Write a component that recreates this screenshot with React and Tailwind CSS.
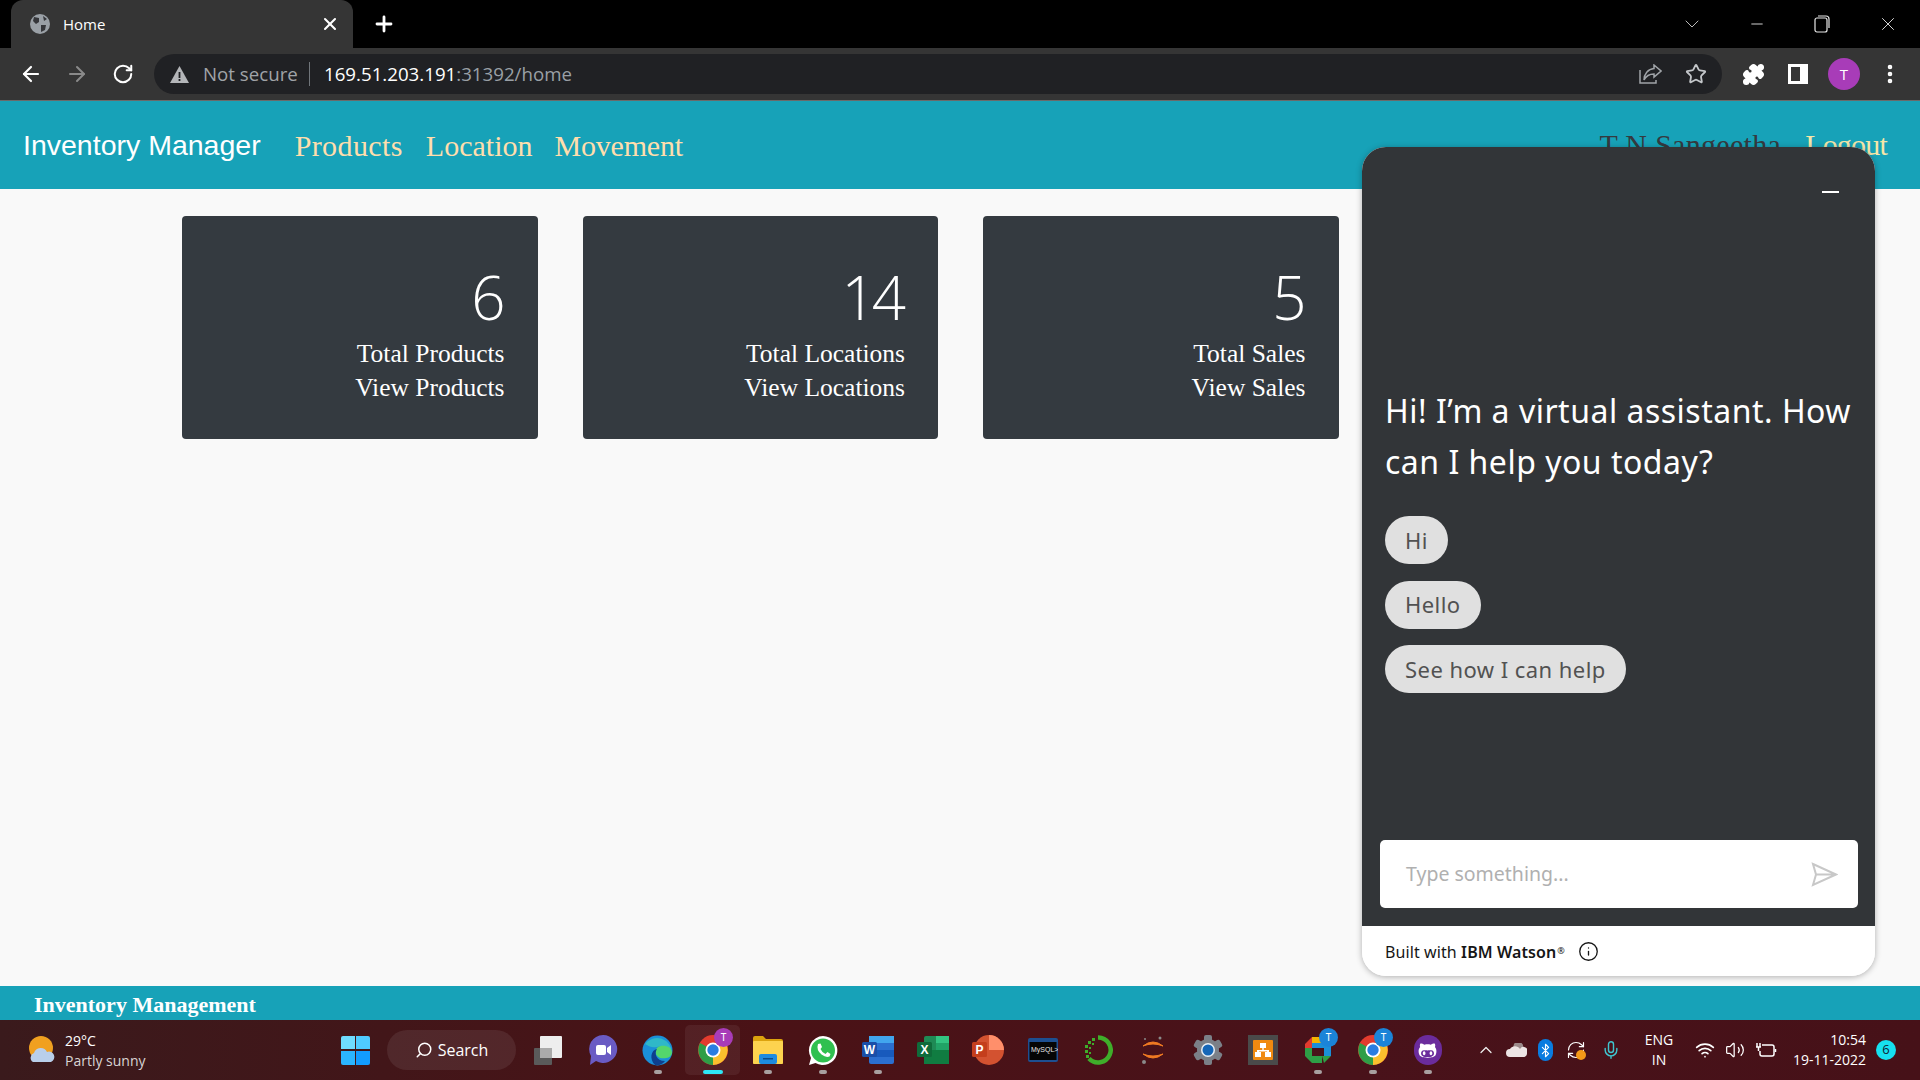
import React from "react";
import { ArrowLeft, ArrowRight, RotateCw, Star, Mic, Wifi, Volume2, Bluetooth, ChevronUp, ChevronDown, Minus, X, Plus, Search, Info, RefreshCw, EllipsisVertical, Puzzle } from "lucide-react";
import { FaGithubAlt } from "react-icons/fa";

const serif = "[font-family:'Liberation_Serif',serif]";

function Globe() {
  return (
    <svg width="20" height="20" viewBox="0 0 20 20">
      <circle cx="10" cy="10" r="10" fill="#9aa0a6" />
      <path d="M4 3 L9 4 L9 8 L6 10 L3 7 Z M11 11 L16 11 L15 16 L11 18 Z M13 2 L17 5 L14 7 Z" fill="#35363a" />
    </svg>
  );
}

function StatCard({ n, a, b }) {
  return (
    <div className="w-[355.5px] h-[223px] bg-[#343a40] rounded-[4px] flex flex-col items-end pt-[48px] pr-[33px] text-white">
      <div className="text-[60px] leading-[66px] font-[350] mb-[7px] mr-[3px] tracking-[-4px] [font-family:'Open_Sans',sans-serif]">{n}</div>
      <div className={`${serif} text-[25.5px] leading-[34px]`}>{a}</div>
      <div className={`${serif} text-[25.5px] leading-[34px]`}>{b}</div>
    </div>
  );
}

function Chip({ children }) {
  return (
    <div className="self-start h-[48px] rounded-[25px] bg-[#e0e0e0] text-[#525252] px-[20px] flex items-center text-[22px] tracking-[0.45px]">
      {children}
    </div>
  );
}

function TaskIcon({ children, dot, active }) {
  return (
    <div className={`relative w-[55px] h-[50px] flex items-center justify-center rounded-[5px] ${active ? "bg-[#ffffff10]" : ""}`}>
      {children}
      {dot && <div className={`absolute bottom-[1px] h-[4px] rounded-full ${active ? "w-[20px] bg-[#2ee6f5]" : "w-[8px] bg-[#a8a0a0]"}`} />}
    </div>
  );
}

function Badge({ c = "#a83cb8" }) {
  return (
    <div className="absolute top-[3px] left-[29px] w-[19px] h-[19px] rounded-full flex items-center justify-center text-[10px] text-white" style={{ background: c }}>
      T
    </div>
  );
}

function Chrome({ size = 30 }) {
  return (
    <svg width={size} height={size} viewBox="0 0 30 30">
      <circle cx="15" cy="15" r="15" fill="#e33b2e" />
      <path d="M15 15 L28 8 A15 15 0 0 1 15 30 Z" fill="#fbc02d" />
      <path d="M15 15 L15 30 A15 15 0 0 1 2 8 Z" fill="#2e9e46" />
      <circle cx="15" cy="15" r="7.5" fill="#fff" />
      <circle cx="15" cy="15" r="5.7" fill="#2a7de1" />
    </svg>
  );
}

function TaskbarApps() {
  return (
    <div className="flex items-center ml-[4px]">
      <TaskIcon>
        <svg width="30" height="30" viewBox="0 0 30 30">
          <rect x="1" y="13" width="18" height="17" rx="1" fill="#5a5a5a" />
          <rect x="7" y="1" width="22" height="22" rx="1" fill="#eeeeee" />
          <rect x="7" y="13" width="12" height="10" fill="#aaa" />
        </svg>
      </TaskIcon>
      <TaskIcon>
        <svg width="30" height="32" viewBox="0 0 30 32">
          <path d="M15 1 A14 14 0 1 1 8 27 L2 31 L3 22 A14 14 0 0 1 15 1 Z" fill="#6a5bc4" />
          <rect x="8" y="11" width="10" height="10" rx="2" fill="#fff" />
          <path d="M19 14 L23 11 V21 L19 18 Z" fill="#fff" />
        </svg>
      </TaskIcon>
      <TaskIcon dot>
        <svg width="31" height="31" viewBox="0 0 31 31">
          <circle cx="15.5" cy="15.5" r="15" fill="#1b8fd8" />
          <path d="M3 9 A15 15 0 0 1 30 18 C28 12 20 10 15 12 C9 13 7 11 3 9 Z" fill="#2fb8c8" />
          <path d="M30 18 C30 11 21 9 16 12 C12 15 13 21 18 23 C23 24 29 23 30 18 Z" fill="#54d66c" />
          <path d="M13 30 C7 24 9 15 15 14 C12 18 14 26 23 26 C20 30 16 31 13 30 Z" fill="#0e3f8e" />
        </svg>
      </TaskIcon>
      <TaskIcon dot active>
        <Chrome />
        <Badge />
      </TaskIcon>
      <TaskIcon dot>
        <svg width="30" height="28" viewBox="0 0 30 28">
          <path d="M0 2 Q0 0 2 0 H10 L13 3 H28 Q30 3 30 5 V26 Q30 28 28 28 H2 Q0 28 0 26 Z" fill="#dca30e" />
          <rect y="5" width="30" height="23" rx="1" fill="#fdd34f" />
          <rect x="6" y="18" width="18" height="10" rx="2" fill="#1d8be0" />
          <rect x="10" y="22" width="10" height="1.5" fill="#0b4c8a" />
        </svg>
      </TaskIcon>
      <TaskIcon dot>
        <svg width="30" height="31" viewBox="0 0 30 31">
          <path d="M15 1 A14.5 14.5 0 1 1 7.5 28 L1 30 L3 23 A14.5 14.5 0 0 1 15 1 Z" fill="#fff" />
          <circle cx="15" cy="15.5" r="12" fill="#2fc04f" />
          <path d="M10 9 L12.5 8.5 L14 12 L12.5 14 Q14 17.5 17.5 19 L19.5 17 L22.5 19 L21.5 21.5 Q18 23 13.5 19.5 Q8 15 10 9 Z" fill="#fff" />
        </svg>
      </TaskIcon>
      <TaskIcon dot>
        <svg width="32" height="28" viewBox="0 0 32 28">
          <rect x="7" y="0" width="25" height="28" rx="2" fill="#2b6fd0" />
          <rect x="7" y="0" width="25" height="7" fill="#41a5ee" />
          <rect x="7" y="14" width="25" height="7" fill="#185abd" />
          <rect x="0" y="6" width="15" height="15" rx="1.5" fill="#1a4fa8" />
          <text x="7.5" y="18" textAnchor="middle" fontSize="12" fontWeight="700" fill="#fff" fontFamily="Liberation Sans">W</text>
        </svg>
      </TaskIcon>
      <TaskIcon>
        <svg width="32" height="28" viewBox="0 0 32 28">
          <rect x="7" y="0" width="25" height="28" rx="2" fill="#1f8a55" />
          <rect x="19" y="0" width="13" height="7" fill="#33c481" />
          <rect x="19" y="7" width="13" height="7" fill="#21a366" />
          <rect x="7" y="14" width="25" height="14" fill="#107c41" />
          <rect x="0" y="6" width="15" height="15" rx="1.5" fill="#0f6b3a" />
          <text x="7.5" y="18" textAnchor="middle" fontSize="12" fontWeight="700" fill="#fff" fontFamily="Liberation Sans">X</text>
        </svg>
      </TaskIcon>
      <TaskIcon>
        <svg width="32" height="30" viewBox="0 0 32 30">
          <circle cx="17" cy="15" r="15" fill="#d35230" />
          <path d="M17 0 A15 15 0 0 1 32 15 H17 Z" fill="#ff8f6b" />
          <rect x="0" y="7" width="15" height="15" rx="1.5" fill="#c43e1c" />
          <text x="7.5" y="19" textAnchor="middle" fontSize="12" fontWeight="700" fill="#fff" fontFamily="Liberation Sans">P</text>
        </svg>
      </TaskIcon>
      <TaskIcon>
        <svg width="30" height="24" viewBox="0 0 30 24">
          <rect width="30" height="24" rx="2" fill="#1d4f91" />
          <rect x="1.5" y="4" width="27" height="18" fill="#050505" />
          <text x="3" y="14" fontSize="7" fill="#e8e8e8" fontFamily="Liberation Sans">MySQL&gt;</text>
        </svg>
      </TaskIcon>
      <TaskIcon>
        <svg width="30" height="30" viewBox="0 0 30 30">
          <path d="M15 2.5 A12.5 12.5 0 1 1 6 23.5" fill="none" stroke="#3fae2a" strokeWidth="4.5" />
          <g fill="#3fae2a">
            <rect x="9" y="3" width="3" height="3" /><rect x="5" y="6" width="3" height="3" /><rect x="9" y="8" width="2" height="2" />
            <rect x="2" y="10" width="3" height="3" /><rect x="6" y="12" width="2" height="2" /><rect x="2" y="15" width="3" height="3" />
            <rect x="6" y="17" width="2" height="2" /><rect x="3" y="20" width="3" height="3" />
          </g>
        </svg>
      </TaskIcon>
      <TaskIcon>
        <svg width="26" height="30" viewBox="0 0 26 30">
          <path d="M3 11 Q13 3 23 11 Q13 7 3 11 Z M3 19 Q13 27 23 19 Q13 23 3 19 Z" fill="#f07a22" stroke="#f07a22" strokeWidth="1" />
          <circle cx="20" cy="3" r="1.5" fill="#8a8a8a" />
          <circle cx="4" cy="27" r="2" fill="#8a8a8a" />
          <circle cx="5" cy="4" r="1" fill="#8a8a8a" />
        </svg>
      </TaskIcon>
      <TaskIcon>
        <svg width="30" height="30" viewBox="0 0 30 30">
          <g fill="#7b8088">
            <circle cx="15" cy="15" r="11" />
            <rect x="11" y="0" width="8" height="30" rx="2" />
            <rect x="11" y="0" width="8" height="30" rx="2" transform="rotate(60 15 15)" />
            <rect x="11" y="0" width="8" height="30" rx="2" transform="rotate(120 15 15)" />
          </g>
          <circle cx="15" cy="15" r="7" fill="#e8eef5" />
          <circle cx="15" cy="15" r="5.5" fill="#1566b7" />
        </svg>
      </TaskIcon>
      <TaskIcon>
        <svg width="30" height="30" viewBox="0 0 30 30">
          <rect width="30" height="30" fill="#4a4a4a" />
          <rect x="5" y="5" width="20" height="20" rx="1" fill="#f08a10" />
          <path d="M12 8 H18 V13 H15.7 V15 H21 V17 H23 V22 H17 V17 H19 V16.5 H11 V17 H13 V22 H7 V17 H9 V15 H14.3 V13 H12 Z" fill="#fff" />
        </svg>
      </TaskIcon>
      <TaskIcon dot>
        <svg width="30" height="30" viewBox="0 0 30 30">
          <path d="M9 2 H21 L28 9 V21 H21 V13 H9 Z" fill="#1b8fd8" />
          <path d="M9 2 H19 V8 H9 Z" fill="#f4b400" />
          <path d="M2 9 L9 2 V13 H2 Z" fill="#e33b2e" />
          <path d="M2 13 H9 V21 H19 V28 H9 L2 21 Z" fill="#2e9e46" />
          <path d="M19 21 H28 L21 28 Z" fill="#2e9e46" />
        </svg>
        <Badge c="#1b84d8" />
      </TaskIcon>
      <TaskIcon dot>
        <Chrome />
        <Badge c="#1b84d8" />
      </TaskIcon>
      <TaskIcon dot>
        <div className="w-[28px] h-[30px] rounded-full bg-[#6b2c9c] flex items-center justify-center">
          <FaGithubAlt size={19} color="#fff" />
        </div>
      </TaskIcon>
    </div>
  );
}

function Tray() {
  return (
    <div className="flex items-center ml-[21px] text-white">
      <ChevronUp size={22} strokeWidth={1.5} className="text-[#eee] w-[20px]" />
      <svg width="21" height="14" viewBox="0 0 21 14" className="ml-[10px]">
        <path d="M8 1 A5 5 0 0 1 17 5 A4 4 0 0 1 17 12 H5 Z" fill="#9b8a8a" />
        <path d="M4 14 A4 4 0 0 1 4 6 A6 6 0 0 1 14 6 A4 4 0 0 1 21 10 A4 4 0 0 1 18 14 Z" fill="#ece4e4" />
      </svg>
      <div className="ml-[11px] w-[15px] h-[22px] rounded-full bg-[#0a7ce0] flex items-center justify-center">
        <Bluetooth size={15} strokeWidth={1.8} />
      </div>
      <div className="relative ml-[13px] w-[20px] h-[20px]">
        <RefreshCw size={20} strokeWidth={1.4} />
        <div className="absolute right-[0px] bottom-[0px] w-[10px] h-[10px] rounded-full bg-[#f59a18]" />
      </div>
      <Mic size={20} strokeWidth={1.7} className="ml-[15px] text-[#3fc5cf]" />
      <div className="ml-[22px] w-[32px] text-center text-[14px] leading-[20px] [font-family:'Open_Sans',sans-serif]">
        <div>ENG</div>
        <div>IN</div>
      </div>
      <Wifi size={20} strokeWidth={2} className="ml-[20px]" />
      <Volume2 size={20} strokeWidth={1.5} className="ml-[10px]" />
      <svg width="22" height="20" viewBox="0 0 22 20" fill="none" stroke="#fff" strokeWidth="1.5" className="ml-[10px]">
        <path d="M7 5 H17 Q19 5 19 7 V14 Q19 16 17 16 H7 Q5 16 5 14 V11" />
        <path d="M20.5 9 V12" />
        <path d="M1 7 H6 M3.5 7 V11 M2 3 V7 M5 3 V7" />
      </svg>
      <div className="ml-[17px] w-[72px] text-right text-[14px] leading-[20px] [font-family:'Open_Sans',sans-serif] whitespace-nowrap flex flex-col items-end">
        <div>10:54</div>
        <div>19-11-2022</div>
      </div>
      <div className="ml-[10px] w-[20px] h-[20px] rounded-full bg-[#16e0f0] text-[#123] text-[13px] flex items-center justify-center [font-family:'Open_Sans',sans-serif]">6</div>
    </div>
  );
}

export default function App() {
  return (
    <div className="relative w-[1920px] h-[1080px] overflow-hidden flex flex-col bg-[#f9f9f9]">
      {/* Tab strip */}
      <div className="h-[48px] bg-black flex items-end pl-[11px] shrink-0 relative">
        <div className="w-[342px] h-[48px] bg-[#353535] rounded-t-[12px] flex items-center pl-[19px] pr-[13px] text-white">
          <Globe />
          <span className="ml-[13px] text-[15px] [font-family:'Open_Sans',sans-serif]">Home</span>
          <X size={20} strokeWidth={2.5} className="ml-auto" />
        </div>
        <Plus size={24} strokeWidth={2.8} className="text-white ml-[19px] mb-[12px]" />
        <div className="ml-auto flex items-center h-[48px] text-[#e8e8e8]">
          <ChevronDown size={24} strokeWidth={1} className="mr-[44px] text-[#bbb]" />
          <Minus size={18} strokeWidth={1.2} className="mr-[48px]" />
          <svg width="16" height="18" viewBox="0 0 16 18" fill="none" stroke="#e8e8e8" strokeWidth="1.2" className="mr-[47px]">
            <rect x="1" y="3" width="12" height="14" rx="2" />
            <path d="M4 1 H12 Q15 1 15 4 V13" />
          </svg>
          <X size={22} strokeWidth={1} className="mr-[21px]" />
        </div>
      </div>

      {/* Toolbar */}
      <div className="h-[53px] bg-[#353535] border-b border-[#6a6a6a] shrink-0 flex items-center pl-[19px] text-white">
        <ArrowLeft size={24} strokeWidth={2.2} />
        <ArrowRight size={24} strokeWidth={2} className="ml-[22px] text-[#8a8a8a]" />
        <RotateCw size={22} strokeWidth={2.2} className="ml-[23px]" />
        <div className="ml-[20px] w-[1568px] h-[40px] rounded-full bg-[#202124] flex items-center pl-[16px] pr-[15px] text-[18.7px] [font-family:'Open_Sans',sans-serif]">
          <svg width="19" height="17" viewBox="0 0 19 17">
            <path d="M9.5 0 L19 17 H0 Z" fill="#b4b6b9" />
            <rect x="8.6" y="6" width="1.8" height="6" fill="#202124" />
            <rect x="8.6" y="13" width="1.8" height="2" fill="#202124" />
          </svg>
          <span className="ml-[14px] text-[#a0a4a8] w-[96px] whitespace-nowrap">Not secure</span>
          <div className="ml-[10px] w-px h-[24px] bg-[#70757a]" />
          <span className="ml-[14px] whitespace-nowrap">169.51.203.191<span className="text-[#9aa0a6]">:31392/home</span></span>
          <svg width="23" height="20" viewBox="0 0 23 20" fill="none" stroke="#a0a4a8" strokeWidth="1.5" className="ml-auto">
            <path d="M1 6 V19 H17 V16" />
            <path d="M15 1 L22 7 L15 13 V10 C10 10 7 12 5 16 C5 10 9 5 15 4.5 Z" />
          </svg>
          <Star size={22} strokeWidth={2} className="ml-[23px] text-[#c4c7ca]" />
        </div>
        <Puzzle size={23} fill="#fff" className="ml-[20px]" />
        <div className="ml-[23px] w-[20px] h-[20px] bg-white flex justify-start p-[3px] pr-[8px]">
          <div className="w-full h-full bg-[#353535]" />
        </div>
        <div className="ml-[20px] w-[32px] h-[32px] rounded-full bg-[#a83cb8] flex items-center justify-center text-[15px] [font-family:'Open_Sans',sans-serif]">T</div>
        <EllipsisVertical size={24} strokeWidth={2.6} className="ml-[18px]" />
      </div>

      {/* Navbar */}
      <div className="h-[88px] bg-[#17a2b8] shrink-0 flex items-center pl-[23px] pr-[33px]">
        <span className="text-white text-[28.5px] [font-family:'Liberation_Sans',sans-serif]">Inventory Manager</span>
        <nav className={`${serif} ml-[34px] flex gap-[23px] text-[#ffdead] text-[30px]`}>
          <span className="tracking-[0.4px]">Products</span>
          <span>Location</span>
          <span className="-ml-[1px] tracking-[-0.2px]">Movement</span>
        </nav>
        <div className={`${serif} ml-auto flex gap-[24px] text-[30px] -translate-y-[1px]`}>
          <span className="text-[#343a40] tracking-[0.3px]">T N Sangeetha</span>
          <span className="text-[#f5e6a8] tracking-[-0.8px]">Logout</span>
        </div>
      </div>

      {/* Main */}
      <main className="flex-1 flex items-start pl-[182px] pt-[27px] gap-[45px]">
        <StatCard n="6" a="Total Products" b="View Products" />
        <StatCard n="14" a="Total Locations" b="View Locations" />
        <StatCard n="5" a="Total Sales" b="View Sales" />
      </main>

      {/* Page footer */}
      <div className={`${serif} h-[34px] bg-[#17a2b8] shrink-0 flex items-center pl-[34px] text-white text-[22px] font-bold`}>
        <span className="translate-y-[1px]">Inventory Management</span>
      </div>

      {/* Taskbar */}
      <div className="h-[60px] shrink-0 flex items-center bg-[linear-gradient(90deg,#3a1a1c_0%,#4a1216_40%,#49121a_70%,#461118_100%)] text-white">
        <svg width="30" height="30" viewBox="0 0 30 30" className="ml-[27px]">
          <circle cx="14" cy="13" r="12" fill="#f0a020" />
          <path d="M6 27 A5 5 0 0 1 7 18 A7 7 0 0 1 20 17 A5 5 0 0 1 24 27 Z" fill="#b9cfea" />
        </svg>
        <div className="ml-[8px] w-[100px] pt-[1px] text-[14px] leading-[20px] [font-family:'Open_Sans',sans-serif] whitespace-nowrap">
          <div>29°C</div>
          <div className="text-[#d8d4d4]">Partly sunny</div>
        </div>
        <div className="ml-[176px] grid grid-cols-2 gap-[1.5px] w-[29px] h-[29px]">
          <div className="bg-[#6fdcff] rounded-tl-[2px]" />
          <div className="bg-[#4fcbff] rounded-tr-[2px]" />
          <div className="bg-[#2bb5ff] rounded-bl-[2px]" />
          <div className="bg-[#129cff] rounded-br-[2px]" />
        </div>
        <div className="ml-[17px] w-[129px] h-[40px] rounded-full bg-[#ffffff14] flex items-center justify-center gap-[5px] text-[16px] [font-family:'Open_Sans',sans-serif]">
          <Search size={18} strokeWidth={2} className="-scale-x-100" />
          <span>Search</span>
        </div>
        <TaskbarApps />
        <Tray />
      </div>

      {/* Chat widget */}
      <div className="absolute left-[1362px] top-[147px] w-[513px] h-[829px] rounded-[24px] overflow-hidden flex flex-col shadow-[0_1px_6px_rgba(0,0,0,0.3)] bg-white [font-family:'Noto_Sans',sans-serif]">
        <div className="flex-1 bg-[#323538] flex flex-col">
          <div className="flex justify-end pt-[44px] pr-[36px]">
            <div className="w-[17px] h-[2px] bg-white" />
          </div>
          <div className="mt-[192px] px-[23px] text-white text-[32px] tracking-[0.5px] leading-[51px]">
            Hi! I’m a virtual assistant. How can I help you today?
          </div>
          <div className="mt-[29px] pl-[23px] flex flex-col gap-[16.5px]">
            <Chip>Hi</Chip>
            <Chip>Hello</Chip>
            <Chip>See how I can help</Chip>
          </div>
          <div className="mt-auto mb-[18px] ml-[18px] mr-[17px] h-[68px] bg-white rounded-[5px] flex items-center pl-[26px] pr-[20px] text-[19.5px] text-[#b0b0b0]">
            <span>Type something...</span>
            <svg width="27" height="25" viewBox="0 0 27 25" fill="none" stroke="#c8c8c8" strokeWidth="2" className="ml-auto">
              <path d="M2 2 L25 12.5 L2 23 L5 12.5 Z M5 12.5 H25" />
            </svg>
          </div>
        </div>
        <div className="h-[50px] shrink-0 bg-white flex items-center pl-[23px] text-[16px] tracking-[0.1px] text-[#161616]">
          <span className="translate-y-[1px]">Built with <span className="font-semibold">IBM Watson</span><sup className="text-[9px] ml-[1px]">®</sup></span>
          <Info size={21} strokeWidth={1.5} className="ml-[13px]" />
        </div>
      </div>
    </div>
  );
}
